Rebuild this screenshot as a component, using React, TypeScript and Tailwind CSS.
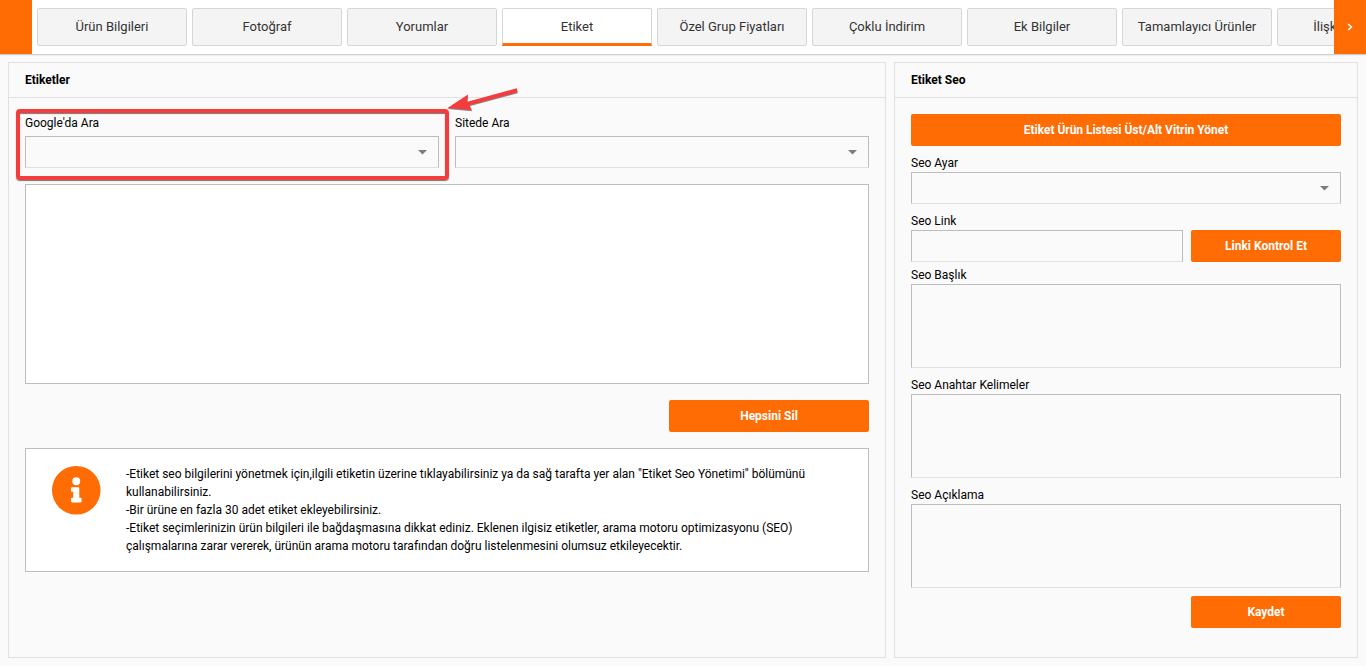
import type { ReactNode } from "react";

const tabs = [
  "Ürün Bilgileri",
  "Fotoğraf",
  "Yorumlar",
  "Etiket",
  "Özel Grup Fiyatları",
  "Çoklu İndirim",
  "Ek Bilgiler",
  "Tamamlayıcı Ürünler",
  "İlişkili Ürünler",
];

function Tab({ label, active }: { label: string; active: boolean }) {
  return (
    <button
      className={
        active
          ? "h-[38px] w-[150px] shrink-0 rounded-t-[2px] border border-b-[3px] border-[#d6d6d6] border-b-[#ff6c04] bg-white pt-px text-[13px] text-[#333]"
          : "h-[38px] w-[150px] shrink-0 rounded-[2px] border border-[#d6d6d6] bg-[#f4f4f4] pb-px text-[13px] text-[#333]"
      }
    >
      {label}
    </button>
  );
}

function Panel({ title, className, children }: { title: string; className: string; children: ReactNode }) {
  return (
    <section className={`border border-[#e0e0e0] ${className}`}>
      <h2 className="h-[35px] border-b border-[#e0e0e0] px-4 text-[12px] leading-[34px] font-bold">{title}</h2>
      <div className="px-4 pt-4">{children}</div>
    </section>
  );
}

function Button({ label, className }: { label: string; className: string }) {
  return (
    <button className={`block h-8 rounded-[2px] bg-[#ff6c04] text-[12px] font-bold text-white ${className}`}>
      {label}
    </button>
  );
}

function Select({ label, labelClass }: { label: string; labelClass: string }) {
  return (
    <div>
      <label className={`block text-[12px] leading-[18px] ${labelClass}`}>{label}</label>
      <div className="flex h-8 items-center justify-end border border-[#bdbdbd] border-b-[#e0e0e0] pr-[11.5px]">
        <svg width="9" height="5" viewBox="0 0 9 5">
          <path d="M0 0H9L4.5 4.5Z" fill="#7c7c7c" />
        </svg>
      </div>
    </div>
  );
}

function TextArea({ label }: { label: string }) {
  return (
    <div>
      <label className="block h-[18px] text-[12px] leading-[18px]">{label}</label>
      <div className="h-[84px] border border-[#bdbdbd] border-b-[#e0e0e0]" />
    </div>
  );
}

export default function App() {
  return (
    <div className="relative h-[666px] w-[1366px] overflow-hidden bg-[#fafafa] font-[Roboto,sans-serif] text-black">
      <header className="flex h-[55px] border-b border-[#cecece] bg-white shadow-[0_1px_1px_#f0f0f0]">
        <div className="h-[54px] w-8 shrink-0 bg-[#ff6c04]" />
        <nav className="flex min-w-0 flex-1 gap-[5px] overflow-hidden pt-2 pl-[5px]">
          {tabs.map((t) => (
            <Tab key={t} label={t} active={t === "Etiket"} />
          ))}
        </nav>
        <button className="flex h-[54px] w-8 shrink-0 items-center justify-center bg-[#ff6c04]">
          <svg width="6" height="8" viewBox="0 0 6 8" fill="none">
            <path d="M1.2 1L4.4 4L1.2 7" stroke="white" strokeWidth="1.5" />
          </svg>
        </button>
      </header>

      <main className="flex gap-2 px-2 pt-[7px]">
        <Panel title="Etiketler" className="h-[596px] w-[878px]">
          <div className="grid grid-cols-2 gap-4">
            <Select label="Google'da Ara" labelClass="h-[22px]" />
            <Select label="Sitede Ara" labelClass="h-[22px]" />
          </div>
          <div className="mt-4 h-[200px] border border-[#bdbdbd] bg-white" />
          <Button label="Hepsini Sil" className="mt-4 ml-auto w-[200px]" />
          <div className="mt-4 flex h-[124px] border border-[#bdbdbd] bg-white pt-4 pl-[26px]">
            <svg className="mt-px shrink-0" width="49" height="49" viewBox="0 0 517 517">
              <circle cx="256" cy="256" r="256" fill="#ff6c04" />
              <path
                fill="white"
                d="M256 118a42 42 0 1 0 0 84 42 42 0 0 0 0-84zm56 254c0 6.600-5.400 12-12 12h-88c-6.600 0-12-5.400-12-12v-24c0-6.600 5.400-12 12-12h12v-64h-12c-6.600 0-12-5.400-12-12v-24c0-6.600 5.400-12 12-12h64c6.600 0 12 5.400 12 12v100h12c6.600 0 12 5.400 12 12v24z"
              />
            </svg>
            <div className="ml-[25px] text-[12px] leading-[18px] tracking-[-0.005px] whitespace-nowrap">
              <p>-Etiket seo bilgilerini yönetmek için,ilgili etiketin üzerine tıklayabilirsiniz ya da sağ tarafta yer alan "Etiket Seo Yönetimi" bölümünü</p>
              <p>kullanabilirsiniz.</p>
              <p>-Bir ürüne en fazla 30 adet etiket ekleyebilirsiniz.</p>
              <p>-Etiket seçimlerinizin ürün bilgileri ile bağdaşmasına dikkat ediniz. Eklenen ilgisiz etiketler, arama motoru optimizasyonu (SEO)</p>
              <p>çalışmalarına zarar vererek, ürünün arama motoru tarafından doğru listelenmesini olumsuz etkileyecektir.</p>
            </div>
          </div>
        </Panel>

        <Panel title="Etiket Seo" className="h-[596px] w-[464px]">
          <Button label="Etiket Ürün Listesi Üst/Alt Vitrin Yönet" className="w-full tracking-[-0.03px]" />
          <div className="mt-2">
            <Select label="Seo Ayar" labelClass="h-[18px]" />
          </div>
          <div className="mt-2 flex items-end gap-2">
            <div className="flex-1">
              <label className="block h-[18px] text-[12px] leading-[18px]">Seo Link</label>
              <div className="h-8 border border-[#bdbdbd] border-b-[#e0e0e0]" />
            </div>
            <Button label="Linki Kontrol Et" className="w-[150px]" />
          </div>
          <div className="mt-1 flex flex-col gap-2">
            <TextArea label="Seo Başlık" />
            <TextArea label="Seo Anahtar Kelimeler" />
            <TextArea label="Seo Açıklama" />
          </div>
          <Button label="Kaydet" className="mt-2 ml-auto w-[150px]" />
        </Panel>
      </main>

      <div className="absolute top-[109px] left-4 h-[71px] w-[433px] rounded-[4px] border-[4.500px] border-[#f33d3d] shadow-[0_1px_1px_#777,inset_0_1px_1px_#777]" />
      <svg className="absolute top-[84px] left-[440px]" width="84" height="32" viewBox="440 84 84 32">
        <path
          d="M447.500 108L468 94.500L467.300 101.700L516.800 88.200L517.600 92.300L469.500 105.300L472 110.200Z"
          fill="#f33d3d"
          className="drop-shadow-[0_1px_0.5px_#888]"
        />
      </svg>
    </div>
  );
}
